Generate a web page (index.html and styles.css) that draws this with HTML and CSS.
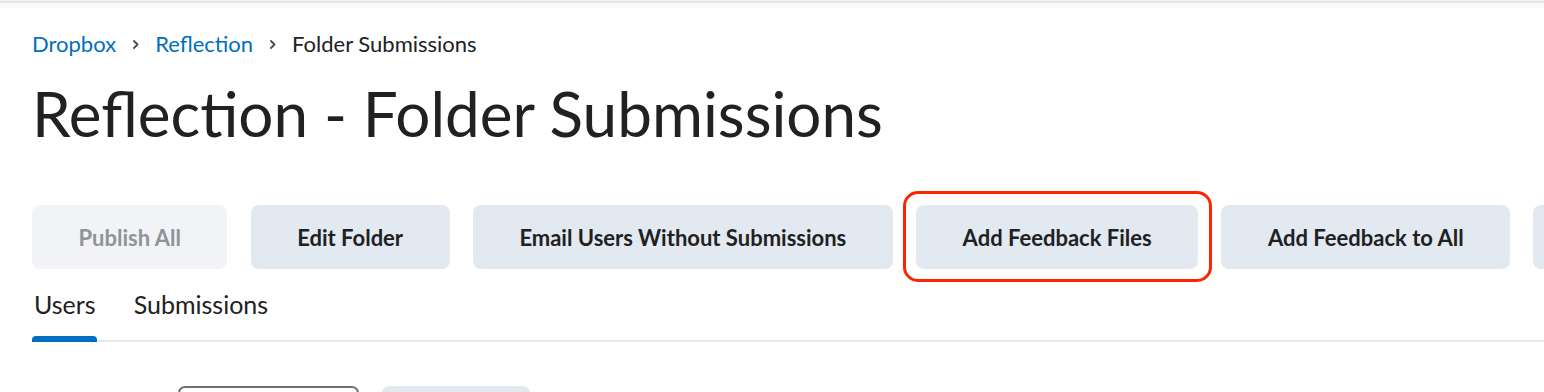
FILE: index.html
```html
<!DOCTYPE html>
<html lang="en">
<head>
<meta charset="utf-8">
<title>Reflection - Folder Submissions</title>
<link rel="stylesheet" href="styles.css">
</head>
<body>
<div class="topbar-wrap"><div class="topbar"></div></div>
<main class="page">
  <nav class="breadcrumbs">
    <a class="crumb-link" href="#">Dropbox</a>
    <svg class="chev" viewBox="0 0 6 9" width="6" height="9"><path d="M1 1 L4.5 4.5 L1 8" fill="none" stroke="#494c4e" stroke-width="1.8" stroke-linecap="round" stroke-linejoin="round"/></svg>
    <a class="crumb-link" href="#">Reflection</a>
    <svg class="chev" viewBox="0 0 6 9" width="6" height="9"><path d="M1 1 L4.5 4.5 L1 8" fill="none" stroke="#494c4e" stroke-width="1.8" stroke-linecap="round" stroke-linejoin="round"/></svg>
    <span class="crumb-current">Folder Submissions</span>
  </nav>
  <h1 class="title">Reflection - Folder Submissions</h1>
  <div class="actions">
    <button class="btn btn-disabled" disabled>Publish All</button>
    <button class="btn">Edit Folder</button>
    <button class="btn">Email Users Without Submissions</button>
    <span class="highlight-wrap"><button class="btn">Add Feedback Files</button></span>
    <button class="btn">Add Feedback to All</button>
    <button class="btn">More Actions</button>
  </div>
  <div class="tabs">
    <div class="tab tab-active">Users</div>
    <div class="tab">Submissions</div>
  </div>
  <div class="filters">
    <div class="field-outline"></div>
    <div class="field-fill"></div>
  </div>
</main>
</body>
</html>
```
FILE: styles.css
```css
* { box-sizing: border-box; }
html, body { margin: 0; padding: 0; background: #ffffff; overflow: hidden; }
body { font-family: Lato, "Open Sans", sans-serif; color: #202122; width: 1544px; height: 392px; }

.topbar-wrap { padding-top: 1px; background: #f3f4f5; }
.topbar { height: 7px; border-top: 2px solid #e3e6e9; background: #f9fafb; }

.page { padding-left: 32px; }

.breadcrumbs {
  margin-top: 23px;
  display: flex;
  align-items: center;
  font-size: 22px;
  line-height: 26px;
  height: 26px;
}
.crumb-link { color: #006fbf; text-decoration: none; }
.chev { margin: 0 16px 0 17px; display: block; }
.crumb-current { color: #202122; }

.title {
  margin: 19px 0 0 0;
  font-size: 62px;
  font-weight: 400;
  line-height: 74px;
  letter-spacing: 0;
}

.actions {
  margin-top: 55px;
  display: flex;
  gap: 23.3px;
  white-space: nowrap;
}
.btn {
  flex: none;
  height: 64px;
  padding: 0 46.5px;
  border: none;
  border-radius: 8px;
  background: #e3e9f1;
  color: #202122;
  font-family: Lato, "Open Sans", sans-serif;
  font-weight: 700;
  font-size: 22px;
}
.btn-disabled { background: #f1f3f6; color: #909397; }

.highlight-wrap { position: relative; display: flex; flex: none; }
.highlight-wrap::after {
  content: "";
  position: absolute;
  left: -13px; right: -14px; top: -14px; bottom: -13px;
  border: 3px solid #ff2400;
  border-radius: 15px;
  pointer-events: none;
}

.tabs {
  margin-top: 20px;
  display: flex;
  border-bottom: 2px solid #e3e9f1;
}
.tab {
  font-size: 25px;
  line-height: 30px;
  padding: 0 0 21px 0;
  margin-right: 38px;
  position: relative;
}
.tab-active { padding-left: 2px; }
.tab-active::after {
  content: "";
  position: absolute;
  left: 0; right: -1px; bottom: -2px;
  height: 6px;
  background: #006fbf;
  border-radius: 4px 4px 0 0;
}

.filters {
  margin-top: 44px;
  display: flex;
  gap: 23px;
  padding-left: 146px;
}
.field-outline {
  width: 181px; height: 40px;
  border: 2px solid #6e7376;
  border-radius: 7px;
}
.field-fill {
  width: 148px; height: 40px;
  background: #e3e9f1;
  border-radius: 7px;
}
```
